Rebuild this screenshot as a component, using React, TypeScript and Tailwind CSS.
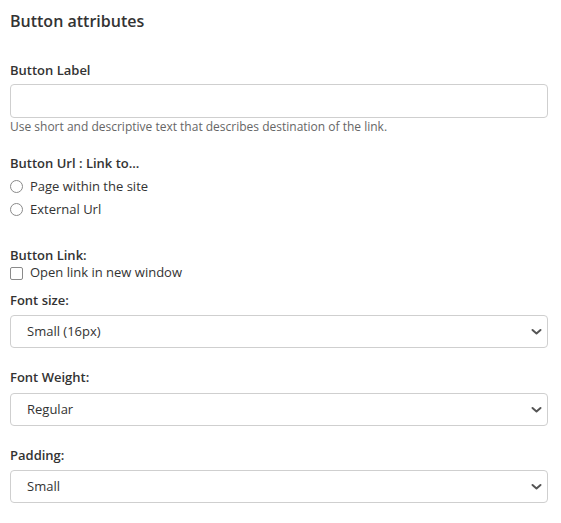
import React, { FC } from 'react'

const font = "font-['Open_Sans',sans-serif]"

const Chevron: FC = () => (
  <svg
    width="11"
    height="7"
    viewBox="0 0 11 7"
    className="pointer-events-none absolute right-[6px] top-1/2 -translate-y-1/2"
  >
    <path d="M1.5 1.5 L5.5 5 L9.5 1.5" fill="none" stroke="#555" strokeWidth="2" strokeLinecap="round" strokeLinejoin="round" />
  </svg>
)

const Label: FC<{ children: React.ReactNode; className?: string }> = ({ children, className = '' }) => (
  <div className={`text-[13px] leading-[18px] font-semibold text-[#333] ${className}`}>{children}</div>
)

const SelectField: FC<{ value: string; options: string[] }> = ({ value, options }) => (
  <div className="relative w-full">
    <select
      defaultValue={value}
      className={`${font} appearance-none w-full h-[33px] rounded-[4px] border border-[#cfcfcf] bg-white pl-[16px] pr-8 text-[13px] text-[#333] outline-none`}
    >
      {options.map((o) => (
        <option key={o}>{o}</option>
      ))}
    </select>
    <Chevron />
  </div>
)

const Radio: FC<{ label: string }> = ({ label }) => (
  <label className="flex items-center h-[23px] text-[13px] text-[#333]">
    <span className="inline-block w-[13px] h-[13px] rounded-full border border-[#8a8a8a] bg-white mr-[7px]" />
    {label}
  </label>
)

const App: FC = () => {
  return (
    <div className={`${font} bg-white min-h-[523px] w-[561px] pl-[10px] pr-[13px] pt-[10px] text-[#333]`}>
      <h1 className="text-[16px] leading-[22px] font-semibold text-[#333]">Button attributes</h1>

      <Label className="mt-[29px] mb-[5px]">Button Label</Label>
      <input type="text" className="w-full h-[34px] rounded-[4px] border border-[#cfcfcf] bg-white px-3 text-[13px] outline-none" />
      <p className="text-[12px] leading-[17px] text-[#666]">
        Use short and descriptive text that describes destination of the link.
      </p>

      <Label className="mt-[19px] mb-[3px]">Button Url : Link to...</Label>
      <Radio label="Page within the site" />
      <Radio label="External Url" />

      <Label className="mt-[25px]">Button Link:</Label>
      <label className="flex items-center h-[18px] text-[13px] text-[#333]">
        <span className="inline-block w-[13px] h-[13px] rounded-[2px] border border-[#8a8a8a] bg-white mr-[7px]" />
        Open link in new window
      </label>

      <Label className="mt-[9px] mb-[6px]">Font size:</Label>
      <SelectField value="Small (16px)" options={['Small (16px)', 'Medium (18px)', 'Large (20px)']} />

      <Label className="mt-[20px] mb-[7px]">Font Weight:</Label>
      <SelectField value="Regular" options={['Regular', 'Bold']} />

      <Label className="mt-[20px] mb-[6px]">Padding:</Label>
      <SelectField value="Small" options={['Small', 'Medium', 'Large']} />
    </div>
  )
}

export default App
